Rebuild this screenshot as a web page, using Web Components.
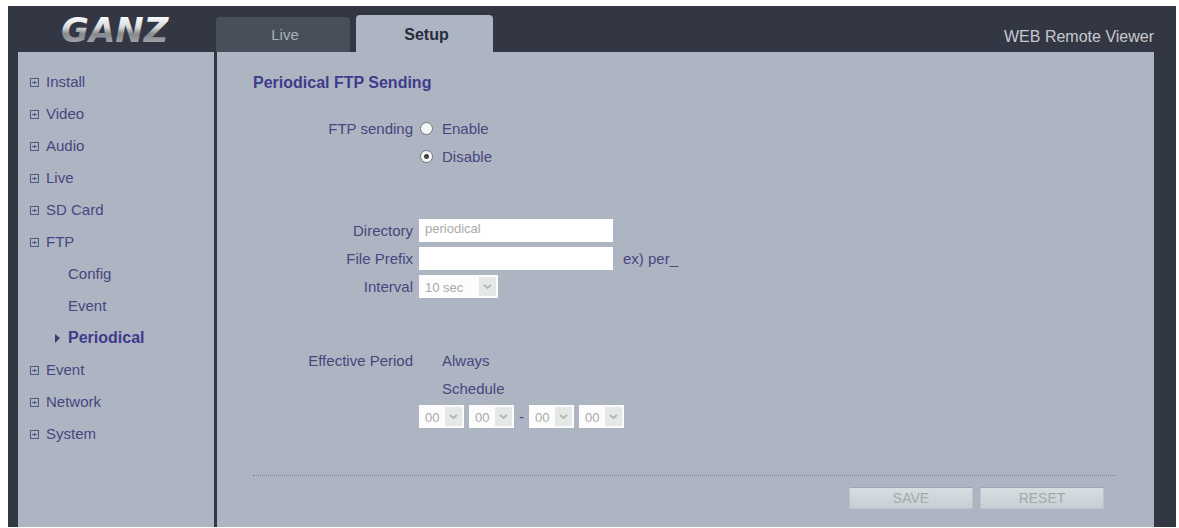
<!DOCTYPE html>
<html lang="en">
<head>
<meta charset="utf-8">
<title>WEB Remote Viewer</title>
<style>
  body {
    --ink: #48467f;
    --ink-strong: #403b8c;
    --panel: #aeb5c2;
    --frame: #333743;
    background: #ffffff;
    color: var( --ink );
    font-family: 'Liberation Sans', Arial, sans-serif;
    font-size: 15px;
    margin: 6px 3px 0 8px;
  }

  input, select, button {
    box-sizing: border-box;
    font-family: inherit;
    margin: 0;
  }

  input[type=text] {
    background: #ffffff;
    border: none;
    color: #aaaaa6;
    font-size: 13px;
    height: 23px;
    padding: 0 6px 4px 6px;
    width: 194px;
  }

  input[type=radio] {
    appearance: none;
    background: #f4f6f6;
    border: solid 1px #74797f;
    border-radius: 50%;
    height: 13px;
    margin: 0 9px 0 1px;
    width: 13px;
  }

  input[type=radio]:checked {
    background: radial-gradient( circle, #3c463c 0 2px, #f4f6f6 3px );
  }

  input[type=radio]:disabled {
    visibility: hidden;
  }

  .hint {
    margin-left: 10px;
  }
</style>
</head>
<body>

<rv-shell>
  <rv-logo slot="logo"></rv-logo>
  <rv-tab slot="tabs" label="Live"></rv-tab>
  <rv-tab slot="tabs" label="Setup" selected></rv-tab>
  <span slot="title">WEB Remote Viewer</span>

  <rv-menu-item slot="menu" label="Install"></rv-menu-item>
  <rv-menu-item slot="menu" label="Video"></rv-menu-item>
  <rv-menu-item slot="menu" label="Audio"></rv-menu-item>
  <rv-menu-item slot="menu" label="Live"></rv-menu-item>
  <rv-menu-item slot="menu" label="SD Card"></rv-menu-item>
  <rv-menu-item slot="menu" label="FTP"></rv-menu-item>
  <rv-menu-item slot="menu" label="Config" child></rv-menu-item>
  <rv-menu-item slot="menu" label="Event" child></rv-menu-item>
  <rv-menu-item slot="menu" label="Periodical" child selected></rv-menu-item>
  <rv-menu-item slot="menu" label="Event"></rv-menu-item>
  <rv-menu-item slot="menu" label="Network"></rv-menu-item>
  <rv-menu-item slot="menu" label="System"></rv-menu-item>

  <rv-form heading="Periodical FTP Sending">
    <rv-group>
      <rv-row>
        <span slot="label">FTP sending</span>
        <input type="radio" name="sending" id="enable"><label for="enable">Enable</label>
      </rv-row>
      <rv-row>
        <input type="radio" name="sending" id="disable" checked><label for="disable">Disable</label>
      </rv-row>
    </rv-group>

    <rv-group>
      <rv-row>
        <label slot="label" for="directory">Directory</label>
        <input type="text" id="directory" value="periodical" disabled>
      </rv-row>
      <rv-row>
        <label slot="label" for="prefix">File Prefix</label>
        <input type="text" id="prefix" disabled><span class="hint">ex) per_</span>
      </rv-row>
      <rv-row>
        <label slot="label" for="interval">Interval</label>
        <rv-select wide><select id="interval" disabled><option>10 sec</option></select></rv-select>
      </rv-row>
    </rv-group>

    <rv-group>
      <rv-row>
        <span slot="label">Effective Period</span>
        <input type="radio" name="period" id="always" disabled><label for="always">Always</label>
      </rv-row>
      <rv-row>
        <input type="radio" name="period" id="schedule" disabled><label for="schedule">Schedule</label>
      </rv-row>
      <rv-row>
        <rv-times>
          <rv-select><select aria-label="Start hour" disabled><option>00</option></select></rv-select>
          <rv-select><select aria-label="Start minute" disabled><option>00</option></select></rv-select>
          <span>-</span>
          <rv-select><select aria-label="End hour" disabled><option>00</option></select></rv-select>
          <rv-select><select aria-label="End minute" disabled><option>00</option></select></rv-select>
        </rv-times>
      </rv-row>
    </rv-group>

    <rv-button slot="actions" label="SAVE"></rv-button>
    <rv-button slot="actions" label="RESET"></rv-button>
  </rv-form>
</rv-shell>

<script>
  // Shared base
  // Puts a template into an open root
  class ViewerElement extends HTMLElement {
    constructor( html ) {
      super();

      const template = document.createElement( 'template' );
      template.innerHTML = html;

      this.attachShadow( {mode: 'open'} );
      this.shadowRoot.appendChild( template.content.cloneNode( true ) );
      this.$label = this.shadowRoot.querySelector( '[part=label]' );
    }

    connectedCallback() {
      this._render();
    }

    attributeChangedCallback( name, old, value ) {
      this._render();
    }

    static get observedAttributes() {
      return ['label', 'heading'];
    }

    _render() {
      const text = this.getAttribute( 'label' ) || this.getAttribute( 'heading' );
      if( this.$label && text !== null )
        this.$label.textContent = text;
    }
  }

  // Frame: header, menu column, content
  class ViewerShell extends ViewerElement {
    constructor() {
      super( /* template */ `
        <style>
          :host {
            background: var( --frame );
            display: block;
            padding: 0 22px 0 10px;
          }

          header {
            display: grid;
            grid-template-columns: 198px 1fr auto;
            height: 46px;
          }

          .logo {
            display: flex;
            justify-content: center;
            padding-top: 4px;
          }

          nav {
            align-items: flex-end;
            display: flex;
            gap: 6px;
          }

          .title {
            align-self: center;
            color: #c6c9cf;
            font-size: 16px;
            padding-top: 16px;
          }

          .body {
            display: grid;
            gap: 3px;
            grid-template-columns: 196px 1fr;
          }

          aside, main {
            background: var( --panel );
          }

          aside {
            padding: 14px 0 0 12px;
          }

          main {
            padding: 20px 39px 18px 36px;
          }
        </style>
        <header>
          <div class="logo"><slot name="logo"></slot></div>
          <nav><slot name="tabs"></slot></nav>
          <div class="title"><slot name="title"></slot></div>
        </header>
        <div class="body">
          <aside><slot name="menu"></slot></aside>
          <main><slot></slot></main>
        </div>
      ` );
    }
  }

  // Metallic wordmark
  class ViewerLogo extends ViewerElement {
    constructor() {
      super( /* template */ `
        <style>
          :host {
            display: block;
          }

          svg {
            display: block;
          }

          text {
            font-family: 'DejaVu Sans', sans-serif;
            font-size: 34px;
            font-style: italic;
            font-weight: bold;
          }
        </style>
        <svg width="130" height="42" viewBox="0 0 130 42">
          <defs>
            <linearGradient id="metal" gradientUnits="userSpaceOnUse" x1="0" y1="7" x2="0" y2="33">
              <stop offset="0" stop-color="#fafafa"/>
              <stop offset="0.4" stop-color="#d6d7d9"/>
              <stop offset="0.65" stop-color="#85888c"/>
              <stop offset="1" stop-color="#a2a4a8"/>
            </linearGradient>
          </defs>
          <text x="9" y="32" fill="url(#metal)">GANZ</text>
        </svg>
      ` );
    }
  }

  class ViewerTab extends ViewerElement {
    constructor() {
      super( /* template */ `
        <style>
          :host {
            display: block;
            width: 134px;
          }

          a {
            background: #47505a;
            border-radius: 4px 4px 0 0;
            box-sizing: border-box;
            color: #a9b1b9;
            display: block;
            height: 35px;
            line-height: 35px;
            padding-left: 4px;
            text-align: center;
            text-decoration: none;
          }

          :host( [selected] ) {
            width: 137px;
          }

          :host( [selected] ) a {
            background: var( --panel );
            color: #262b3c;
            font-size: 16px;
            font-weight: bold;
            height: 37px;
            line-height: 39px;
          }
        </style>
        <a href="#" part="label"></a>
      ` );
    }
  }

  class ViewerMenuItem extends ViewerElement {
    constructor() {
      super( /* template */ `
        <style>
          :host {
            display: block;
          }

          a {
            align-items: center;
            color: var( --ink );
            display: flex;
            gap: 7px;
            line-height: 32px;
            text-decoration: none;
          }

          svg {
            height: 9px;
            width: 9px;
          }

          .arrow {
            display: none;
          }

          :host( [child] ) a {
            padding-left: 22px;
          }

          :host( [child] ) .box {
            display: none;
          }

          :host( [child] ) .arrow {
            display: block;
            visibility: hidden;
          }

          :host( [selected] ) a {
            color: var( --ink-strong );
            font-size: 16px;
            font-weight: bold;
          }

          :host( [selected] ) .arrow {
            visibility: visible;
          }
        </style>
        <a href="#">
          <svg class="box" viewBox="0 0 9 9">
            <rect x="0.5" y="0.5" width="8" height="8" fill="none" stroke="#55577f"/>
            <path d="M2 4.5h5M4.5 3v3" stroke="#55577f"/>
          </svg>
          <svg class="arrow" viewBox="0 0 9 9">
            <path d="M3 0l5 4-5 5z" fill="#3b3f6c"/>
          </svg>
          <span part="label"></span>
        </a>
      ` );
    }
  }

  class ViewerForm extends ViewerElement {
    constructor() {
      super( /* template */ `
        <style>
          :host {
            display: block;
          }

          h1 {
            color: var( --ink-strong );
            font-size: 16px;
            line-height: 22px;
            margin: 0 0 20px 0;
          }

          .groups {
            display: grid;
            gap: 46px;
          }

          footer {
            border-top: dotted 1px #7c8290;
            display: flex;
            gap: 7px;
            justify-content: flex-end;
            margin-top: 45px;
            padding: 11px 11px 0 0;
          }
        </style>
        <h1 part="label"></h1>
        <div class="groups"><slot></slot></div>
        <footer><slot name="actions"></slot></footer>
      ` );
    }
  }

  class ViewerGroup extends ViewerElement {
    constructor() {
      super( /* template */ `
        <style>
          :host {
            display: block;
          }
        </style>
        <slot></slot>
      ` );
    }
  }

  // Label at the left, controls at the right
  class ViewerRow extends ViewerElement {
    constructor() {
      super( /* template */ `
        <style>
          :host {
            align-items: center;
            display: grid;
            gap: 6px;
            grid-template-columns: 160px 1fr;
            height: 28px;
          }

          .label {
            text-align: right;
          }

          .control {
            align-items: center;
            display: flex;
          }
        </style>
        <div class="label"><slot name="label"></slot></div>
        <div class="control"><slot></slot></div>
      ` );
    }
  }

  // Draws the arrow over a slotted select
  class ViewerSelect extends ViewerElement {
    constructor() {
      super( /* template */ `
        <style>
          :host {
            align-items: center;
            display: grid;
            height: 23px;
            width: 45px;
          }

          :host( [wide] ) {
            width: 79px;
          }

          ::slotted( select ) {
            appearance: none;
            background: #fbfcfb;
            border: none;
            border-radius: 0;
            color: #aaaaa6;
            font-size: 13px;
            grid-area: 1 / 1;
            height: 23px;
            opacity: 1;
            padding: 2px 0 0 6px;
            width: 100%;
          }

          svg {
            background: #e4e8e6;
            grid-area: 1 / 1;
            height: 19px;
            justify-self: end;
            margin-right: 2px;
            pointer-events: none;
            width: 17px;
            z-index: 1;
          }
        </style>
        <slot></slot>
        <svg viewBox="0 0 17 19">
          <path d="M5 8l3.5 3 3.5-3" fill="none" stroke="#b4b8ae" stroke-width="2"/>
        </svg>
      ` );
    }
  }

  class ViewerTimes extends ViewerElement {
    constructor() {
      super( /* template */ `
        <style>
          :host {
            align-items: center;
            display: flex;
            gap: 5px;
          }
        </style>
        <slot></slot>
      ` );
    }
  }

  class ViewerButton extends ViewerElement {
    constructor() {
      super( /* template */ `
        <style>
          :host {
            display: block;
          }

          button {
            background: linear-gradient( #d6dee2, #c6cfd4 );
            border: solid 1px #bcc3c9;
            border-top-color: #9fa5ad;
            box-sizing: border-box;
            color: #a5a9a8;
            display: block;
            font-family: inherit;
            font-size: 14px;
            height: 22px;
            line-height: 20px;
            padding: 0;
            width: 124px;
          }
        </style>
        <button type="button" part="label" disabled></button>
      ` );
    }
  }

  window.customElements.define( 'rv-shell', ViewerShell );
  window.customElements.define( 'rv-logo', ViewerLogo );
  window.customElements.define( 'rv-tab', ViewerTab );
  window.customElements.define( 'rv-menu-item', ViewerMenuItem );
  window.customElements.define( 'rv-form', ViewerForm );
  window.customElements.define( 'rv-group', ViewerGroup );
  window.customElements.define( 'rv-row', ViewerRow );
  window.customElements.define( 'rv-select', ViewerSelect );
  window.customElements.define( 'rv-times', ViewerTimes );
  window.customElements.define( 'rv-button', ViewerButton );
</script>
</body>
</html>
